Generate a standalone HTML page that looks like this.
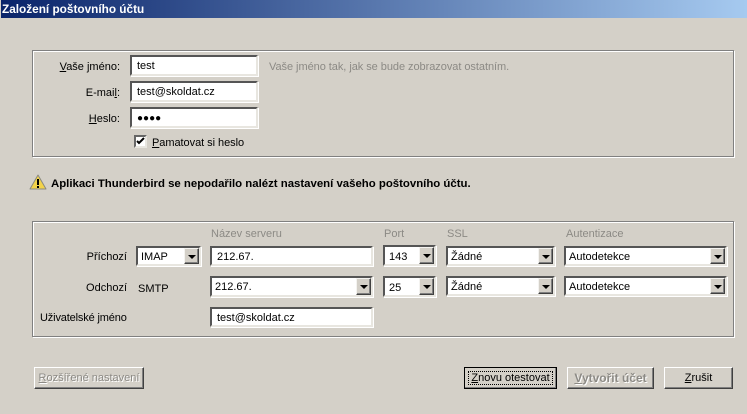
<!DOCTYPE html>
<html lang="cs"><head><meta charset="utf-8"><title>Založení poštovního účtu</title>
<style>
html,body{margin:0;padding:0;width:747px;height:414px;overflow:hidden;background:#d4d0c8}
body{position:relative;font-family:"Liberation Sans",sans-serif;font-size:11px;color:#000}
div,span.t{position:absolute;box-sizing:border-box}
.t{white-space:nowrap;line-height:14px;height:14px}
.r{text-align:right}
.g{color:#8c8a85}
u{text-decoration:underline}
#title{left:1px;top:0;width:746px;height:18px;background:linear-gradient(90deg,#0a246a,#a6caf0);color:#fff;font-weight:bold;font-size:11.8px;line-height:18px;padding-left:1px;white-space:nowrap}
.box{border:1px solid #808080;box-shadow:1px 1px 0 #fff,inset 1px 1px 0 #fff}
.in{background:#fff;border:2px solid;border-color:#555 #e8e6e0 #e8e6e0 #555;box-shadow:1px 1px 0 #fff;line-height:19px;padding-left:4px;white-space:nowrap}
.ar{right:0;top:0;bottom:0;width:15px;background:#d4d0c8;border:1px solid;border-color:#f4f3f0 #404040 #404040 #f4f3f0;box-shadow:inset -1px -1px 0 #808080}
.ar:after{content:"";position:absolute;left:3px;top:6px;border:4px solid transparent;border-top:4px solid #000;border-bottom:0}
.btn{border:1px solid;border-color:#fff #404040 #404040 #fff;box-shadow:inset -1px -1px 0 #808080;text-align:center;line-height:20px;background:#d4d0c8;white-space:nowrap}
.dis{color:#8c8a85;text-shadow:1px 1px 0 #fff}
</style></head><body>
<div id="title">Založení poštovního účtu</div>

<div class="box" style="left:32px;top:50px;width:702px;height:107px"></div>
<span class="t r" style="left:40px;width:80px;top:60px"><u>V</u>aše jméno:</span>
<span class="t r" style="left:40px;width:80px;top:86px">E-mai<u>l</u>:</span>
<span class="t r" style="left:40px;width:80px;top:112px"><u>H</u>eslo:</span>
<div class="in" style="left:130px;top:55px;width:128px;height:21px;padding-left:5px">test</div>
<div class="in" style="left:130px;top:81px;width:128px;height:21px;padding-left:5px">test@skoldat.cz</div>
<div class="in" style="left:130px;top:107px;width:128px;height:21px;padding-left:5px;font-size:10px">●●●●</div>
<div style="left:134px;top:135px;width:13px;height:13px;background:#fff;border:2px solid;border-color:#666 #e8e6e0 #e8e6e0 #666">
<svg width="9" height="9" viewBox="0 0 9 9" style="position:absolute;left:0;top:0"><path d="M1 4l2 2 5-5" fill="none" stroke="#000" stroke-width="2"/></svg></div>
<span class="t" style="left:152px;top:136px;letter-spacing:-.05px"><u>P</u>amatovat si heslo</span>
<span class="t g" style="left:269px;top:60px;letter-spacing:-.05px">Vaše jméno tak, jak se bude zobrazovat ostatním.</span>

<svg width="18" height="16" viewBox="0 0 18 16" style="position:absolute;left:29px;top:174px"><path d="M9 1L1 15h16z" fill="#f3d34a" stroke="#8a8a80" stroke-linejoin="round"/><path d="M9 5v6M9 12v2" stroke="#000" stroke-width="2"/></svg>
<span class="t" style="left:51px;top:177px;font-weight:bold;font-size:11.4px">Aplikaci Thunderbird se nepodařilo nalézt nastavení vašeho poštovního účtu.</span>

<div class="box" style="left:32px;top:221px;width:702px;height:116px"></div>
<span class="t g" style="left:211px;top:227px">Název serveru</span>
<span class="t g" style="left:384px;top:227px">Port</span>
<span class="t g" style="left:447px;top:227px">SSL</span>
<span class="t g" style="left:566px;top:227px">Autentizace</span>

<span class="t r" style="left:40px;width:87px;top:250px">Příchozí</span>
<span class="t r" style="left:40px;width:87px;top:281px">Odchozí</span>
<span class="t" style="left:138px;top:282px">SMTP</span>
<span class="t" style="left:40px;top:311px;letter-spacing:-.15px">Uživatelské jméno</span>

<div class="in" style="left:136px;top:246px;width:65px;height:20px;padding-left:3px">IMAP<div class="ar"></div></div>
<div class="in" style="left:210px;top:246px;width:163px;height:20px;padding-left:5px">212.67.</div>
<div class="in" style="left:210px;top:276px;width:163px;height:21px;padding-left:3px">212.67.<div class="ar"></div></div>
<div class="in" style="left:210px;top:307px;width:163px;height:20px;padding-left:5px">test@skoldat.cz</div>

<div class="in" style="left:383px;top:245px;width:53px;height:21px;line-height:20px">143<div class="ar"></div></div>
<div class="in" style="left:383px;top:276px;width:53px;height:21px;line-height:20px">25<div class="ar"></div></div>
<div class="in" style="left:446px;top:246px;width:109px;height:20px;padding-left:3px">Žádné<div class="ar"></div></div>
<div class="in" style="left:446px;top:276px;width:109px;height:20px;padding-left:3px">Žádné<div class="ar"></div></div>
<div class="in" style="left:564px;top:246px;width:163px;height:20px;padding-left:3px">Autodetekce<div class="ar"></div></div>
<div class="in" style="left:564px;top:276px;width:163px;height:20px;padding-left:3px">Autodetekce<div class="ar"></div></div>

<div class="btn dis" style="left:34px;top:367px;width:110px;height:22px"><u>R</u>ozšířené nastavení</div>
<div class="btn" style="left:464px;top:367px;width:93px;height:22px;border:1px solid #000;box-shadow:inset -1px -1px 0 #808080"><u>Z</u>novu otestovat<div style="left:3px;top:3px;right:3px;bottom:3px;border:1px dotted #000"></div></div>
<div class="btn dis" style="left:567px;top:367px;width:87px;height:22px;font-weight:bold;font-size:12px"><u>V</u>ytvořit účet</div>
<div class="btn" style="left:664px;top:367px;width:69px;height:22px"><u>Z</u>rušit</div>
</body></html>
